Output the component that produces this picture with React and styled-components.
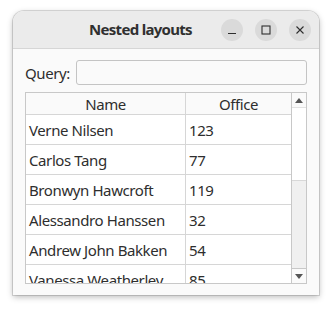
import React from 'react';
import styled, { createGlobalStyle } from 'styled-components';

const GlobalStyle = createGlobalStyle`
  html, body {
    margin: 0;
    padding: 0;
    background: #ffffff;
  }
  body {
    font-family: 'Noto Sans', 'Open Sans', sans-serif;
    color: #2e2e2e;
  }
`;

const Page = styled.div`
  width: 332px;
  height: 312px;
  padding: 11px 13px 0 13px;
  box-sizing: border-box;
`;

const Window = styled.div`
  width: 306px;
  height: 284px;
  display: flex;
  flex-direction: column;
  background: #fafafa;
  border-radius: 11px 11px 0 0;
  box-shadow: 0 0 0 1px rgba(0, 0, 0, 0.13), 0 2px 6px rgba(0, 0, 0, 0.28);
  overflow: hidden;
`;

const TitleBar = styled.div`
  height: 37px;
  flex: none;
  display: flex;
  align-items: center;
  justify-content: flex-end;
  position: relative;
  background: #ebebeb;
  border-bottom: 1px solid #d6d6d6;
  padding-right: 8px;
  gap: 12px;
`;

const Title = styled.div`
  position: absolute;
  left: 76px;
  top: 0;
  line-height: 37px;
  font-size: 15px;
  font-weight: 700;
  letter-spacing: -0.7px;
  color: #303030;
`;

const WinButton = styled.div`
  width: 22px;
  height: 22px;
  border-radius: 50%;
  background: #dadada;
  display: flex;
  align-items: center;
  justify-content: center;
`;

const Content = styled.div`
  flex: 1;
  display: flex;
  flex-direction: column;
  padding: 11px 12px 11px 12px;
  gap: 7px;
  min-height: 0;
`;

const QueryRow = styled.div`
  display: flex;
  align-items: center;
  gap: 6px;
  height: 25px;
`;

const Label = styled.span`
  font-size: 15px;
  letter-spacing: -0.4px;
  color: #2e2e2e;
`;

const Input = styled.div`
  flex: 1;
  height: 25px;
  box-sizing: border-box;
  border: 1px solid #c4c4c4;
  border-radius: 3px;
  background: #fafafa;
`;

const Table = styled.div`
  flex: 1;
  display: flex;
  border: 1px solid #c8c8c8;
  background: #ffffff;
  min-height: 0;
  overflow: hidden;
`;

const Grid = styled.div`
  flex: 1;
  display: flex;
  flex-direction: column;
  overflow: hidden;
`;

const Row = styled.div`
  display: grid;
  grid-template-columns: 159px 1fr;
  flex: none;
  height: ${(p) => (p.$header ? '21px' : '29px')};
  border-bottom: 1px solid #d6d6d6;
  background: ${(p) => (p.$header ? '#fafafa' : '#ffffff')};
`;

const Cell = styled.div`
  display: flex;
  align-items: center;
  justify-content: ${(p) => (p.$header ? 'center' : 'flex-start')};
  padding-left: ${(p) => (p.$header ? '0' : '3px')};
  font-size: 15px;
  letter-spacing: -0.4px;
  color: #2e2e2e;
  white-space: nowrap;
  overflow: hidden;
  & + & {
    border-left: 1px solid #d6d6d6;
  }
`;

const ScrollBar = styled.div`
  width: 14px;
  flex: none;
  display: flex;
  flex-direction: column;
  border-left: 1px solid #c8c8c8;
  background: #f0f0f0;
`;

const Arrow = styled.div`
  height: 14px;
  flex: none;
  display: flex;
  align-items: center;
  justify-content: center;
  background: #fafafa;
  border-top: ${(p) => (p.$down ? '1px solid #c8c8c8' : 'none')};
  border-bottom: ${(p) => (p.$down ? 'none' : '1px solid #e2e2e2')};
`;

const Handle = styled.div`
  height: 72px;
  flex: none;
  background: #ffffff;
  border-bottom: 1px solid #d8d8d8;
`;

const Track = styled.div`
  flex: 1;
`;

const people = [
  ['Verne Nilsen', '123'],
  ['Carlos Tang', '77'],
  ['Bronwyn Hawcroft', '119'],
  ['Alessandro Hanssen', '32'],
  ['Andrew John Bakken', '54'],
  ['Vanessa Weatherley', '85'],
];

const Icon = ({ children }) => (
  <svg width="12" height="12" viewBox="0 0 12 12" fill="none" stroke="#2e2e2e" strokeWidth="1.1">
    {children}
  </svg>
);

export default function App() {
  return (
    <Page>
      <GlobalStyle />
      <Window>
        <TitleBar>
          <Title>Nested layouts</Title>
          <WinButton>
            <Icon><path d="M2 9.5h8" /></Icon>
          </WinButton>
          <WinButton>
            <Icon><rect x="2" y="2" width="8" height="8" /></Icon>
          </WinButton>
          <WinButton>
            <Icon><path d="M2.5 2.5l7 7M9.5 2.5l-7 7" /></Icon>
          </WinButton>
        </TitleBar>
        <Content>
          <QueryRow>
            <Label>Query:</Label>
            <Input />
          </QueryRow>
          <Table>
            <Grid>
              <Row $header>
                <Cell $header>Name</Cell>
                <Cell $header>Office</Cell>
              </Row>
              {people.map(([name, office]) => (
                <Row key={name}>
                  <Cell>{name}</Cell>
                  <Cell>{office}</Cell>
                </Row>
              ))}
            </Grid>
            <ScrollBar>
              <Arrow>
                <svg width="8" height="5" viewBox="0 0 8 5"><path d="M0 5L4 0L8 5Z" fill="#555" /></svg>
              </Arrow>
              <Handle />
              <Track />
              <Arrow $down>
                <svg width="8" height="5" viewBox="0 0 8 5"><path d="M0 0L4 5L8 0Z" fill="#555" /></svg>
              </Arrow>
            </ScrollBar>
          </Table>
        </Content>
      </Window>
    </Page>
  );
}
